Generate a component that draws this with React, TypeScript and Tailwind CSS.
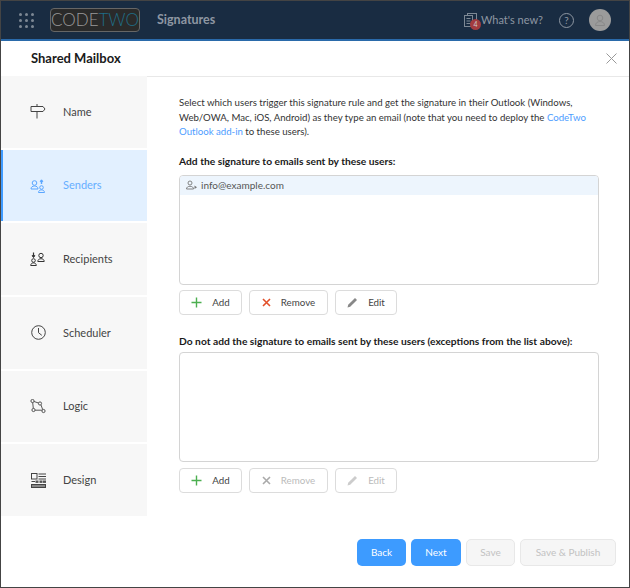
import React from "react";

function Signpost({ c = "#444" }: { c?: string }) {
  return (
    <svg width="16" height="16" viewBox="0 0 16 16" fill="none" stroke={c} strokeWidth="1">
      <path d="M1 2.500h12l2 2.500-2 2.500H1z" fill="none" />
      <path d="M7 0v2.500M7 7.500v7" />
    </svg>
  );
}
function Senders() {
  return (
    <svg width="16" height="14" viewBox="0 0 16 14" fill="none" stroke="#5aa6ff" strokeWidth="1">
      <circle cx="4.500" cy="4" r="2.300" />
      <path d="M1 10c0-2 1.500-3 3.500-3S8 8 8 10z" />
      <circle cx="11.500" cy="8.500" r="1.800" />
      <path d="M8.500 13.500c0-1.600 1.300-2.600 3-2.600s3 1 3 2.600z" />
      <path d="M11.500 1v4" strokeWidth="1.400" />
      <path d="M10.200 2.600 11.500 .8l1.300 1.800z" fill="#5aa6ff" />
    </svg>
  );
}
function Recipients() {
  return (
    <svg width="16" height="14" viewBox="0 0 16 14" fill="none" stroke="#333" strokeWidth="1">
      <circle cx="11" cy="3.500" r="2.200" />
      <path d="M7.800 9.500c0-1.800 1.400-2.800 3.200-2.800s3.200 1 3.200 2.800z" />
      <circle cx="3.500" cy="8.500" r="1.800" />
      <path d="M.7 13.500c0-1.600 1.200-2.600 2.800-2.600s2.800 1 2.800 2.600z" />
      <path d="M3.500 .5v4" strokeWidth="1.200" />
      <path d="M2.200 3.600 3.500 5.600l1.300-2z" fill="#333" />
    </svg>
  );
}
function Clock() {
  return (
    <svg width="15" height="15" viewBox="0 0 15 15" fill="none" stroke="#444" strokeWidth="1">
      <circle cx="7.500" cy="7.500" r="6.800" />
      <path d="M7.500 3v4.700l3.300 2.600" />
    </svg>
  );
}
function Logic() {
  return (
    <svg width="16" height="15" viewBox="0 0 16 15" fill="none" stroke="#444" strokeWidth="0.9">
      <circle cx="2.500" cy="2" r="1.600" />
      <circle cx="10" cy="4.500" r="1.600" />
      <circle cx="3.500" cy="11" r="1.600" />
      <circle cx="13.500" cy="12" r="1.600" />
      <path d="M4 2.500 8.500 4M2.700 3.600 3.300 9.400M5.100 11.200H11.900M11 6 12.700 10.600" />
    </svg>
  );
}
function Design() {
  return (
    <svg width="15" height="15" viewBox="0 0 15 15" fill="none" stroke="#444" strokeWidth="1">
      <rect x="0.500" y="0.500" width="5.500" height="5.500" />
      <path d="M7.500 1h7.500M7.500 3.500h7.500M7.500 6h7.500" />
      <path d="M0.500 8.500H4" />
      <rect x="4.500" y="7.500" width="3" height="2.400" fill="#555" stroke="none" />
      <rect x="8.500" y="7.500" width="3" height="2.400" fill="#555" stroke="none" />
      <rect x="12" y="7.500" width="3" height="2.400" fill="#555" stroke="none" />
      <rect x="0.500" y="11.500" width="14" height="3" fill="#888" />
    </svg>
  );
}
function Plus({ c = "#4caf50" }: { c?: string }) {
  return (
    <svg width="11" height="11" viewBox="0 0 11 11" stroke={c} strokeWidth="1.400">
      <path d="M5.500 0.500v10M0.500 5.500h10" />
    </svg>
  );
}
function Cross({ c }: { c: string }) {
  return (
    <svg width="9" height="9" viewBox="0 0 9 9" stroke={c} strokeWidth="1.600">
      <path d="M1 1l7 7M8 1 1 8" />
    </svg>
  );
}
function Pencil({ c }: { c: string }) {
  return (
    <svg width="11" height="11" viewBox="0 0 11 11" fill={c}>
      <path d="M0.500 10.500 1.200 7.800 8 1l2 2-6.800 6.800z" />
    </svg>
  );
}

function NavItem({ label, icon, active }: { label: string; icon: React.ReactNode; active?: boolean }) {
  return (
    <div
      className={`flex flex-1 items-center pl-[30px] border-l-[3px] -ml-[1px] ${
        active ? "bg-[#e2f0ff] border-[#3f9bff] text-[#66aeff]" : "bg-[#f7f7f7] border-transparent text-[#444]"
      }`}
    >
      <div className="w-[16px] flex justify-center -ml-[3px]">{icon}</div>
      <span className="ml-[17px] text-[11px]">{label}</span>
    </div>
  );
}

function Tool({ w, icon, label, disabled }: { w: string; icon: React.ReactNode; label: string; disabled?: boolean }) {
  return (
    <div
      className={`${w} h-[25px] flex items-center justify-center gap-[10px] rounded-[4px] border border-[#dcdcdc] bg-white text-[9.750px] ${
        disabled ? "text-[#bbb]" : "text-[#444]"
      }`}
    >
      {icon}
      <span>{label}</span>
    </div>
  );
}

export default function App() {
  return (
    <div
      className="w-[630px] h-[588px] flex flex-col bg-white overflow-hidden border border-[#444] text-[#333]"
      style={{ fontFamily: 'Lato, sans-serif' }}
    >
      <header className="h-[38px] shrink-0 bg-[#192c42] flex items-center pl-[18px] pr-[18px]">
        <div className="grid grid-cols-3 gap-[3px] w-[15px]">
          {Array.from({ length: 9 }).map((_, i) => (
            <span key={i} className="w-[3px] h-[3px] rounded-full bg-[#7d8894]" />
          ))}
        </div>
        <div className="ml-[16px] w-[90px] h-[24px] rounded-[4px] border border-[#666] bg-[#2a2a2a] flex items-center justify-center text-[17px] font-light">
          <span className="text-[#999]">CODE</span>
          <span className="text-[#1f6d87]">TWO</span>
        </div>
        <span className="ml-[17px] text-[12.500px] font-bold text-[#8e97a2]">Signatures</span>
        <div className="ml-auto flex items-center">
          <div className="relative w-[15px] h-[15px] mr-[2px]">
            <svg width="14" height="14" viewBox="0 0 14 14" fill="none" stroke="#7d8894" strokeWidth="1">
              <rect x="3.500" y="0.500" width="9" height="11" />
              <rect x="0.500" y="2.500" width="8" height="11" fill="#192c42" />
              <path d="M2.500 5.500h4M2.500 8h4M2.500 10.500h4" />
            </svg>
            <span className="absolute left-[6px] top-[6px] w-[11px] h-[11px] rounded-full bg-[#a33c3f] text-[#ccc] text-[7px] leading-[11px] text-center">4</span>
          </div>
          <span className="text-[11px] text-[#8e97a2]">What's new?</span>
          <div className="ml-[16px] w-[15px] h-[15px] rounded-full border border-[#8e97a2] text-[#8e97a2] text-[10px] leading-[13px] text-center">?</div>
          <div className="ml-[15px] w-[22px] h-[22px] rounded-full bg-[#9b9b9b] flex items-center justify-center">
            <svg width="12" height="12" viewBox="0 0 12 12" fill="none" stroke="#888" strokeWidth="1">
              <circle cx="6" cy="4" r="2.800" />
              <path d="M1.500 11.500c0-2.500 2-4 4.500-4s4.500 1.500 4.500 4z" />
            </svg>
          </div>
        </div>
      </header>
      <div className="h-[2px] shrink-0 bg-[#2a6aaa]" />
      <div className="h-[35px] shrink-0 flex items-center justify-between pl-[30px] pr-[12px]">
        <span className="text-[13px] font-bold text-[#1a1a1a]">Shared Mailbox</span>
        <svg width="11" height="11" viewBox="0 0 11 11" stroke="#999" strokeWidth="1">
          <path d="M0.500 0.500l10 10M10.500 0.500l-10 10" />
        </svg>
      </div>
      <div className="flex flex-1 min-h-0">
        <nav className="w-[146px] h-[440px] flex flex-col gap-[2px] shrink-0">
          <NavItem label="Name" icon={<Signpost />} />
          <NavItem label="Senders" icon={<Senders />} active />
          <NavItem label="Recipients" icon={<Recipients />} />
          <NavItem label="Scheduler" icon={<Clock />} />
          <NavItem label="Logic" icon={<Logic />} />
          <NavItem label="Design" icon={<Design />} />
        </nav>
        <main className="flex-1 min-w-0 flex flex-col">
          <div className="flex-1 border-t border-[#e8e8e8] pl-[32px] pr-[30px] pt-[18px]">
            <p className="text-[9.650px] leading-[14.500px] text-[#333] whitespace-nowrap">
              Select which users trigger this signature rule and get the signature in their Outlook (Windows,
              <br />
              Web/OWA, Mac, iOS, Android) as they type an email (note that you need to deploy the{" "}
              <span className="text-[#4d9dff]">CodeTwo</span>
              <br />
              <span className="text-[#4d9dff]">Outlook add-in</span> to these users).
            </p>
            <div className="mt-[15px] text-[10.250px] font-bold text-[#1a1a1a] leading-[14px] whitespace-nowrap">Add the signature to emails sent by these users:</div>
            <div className="mt-[7px] h-[110px] rounded-[4px] border border-[#d4d4d4] overflow-hidden">
              <div className="h-[19px] bg-[#edf5fd] flex items-center pl-[6px] text-[10px] text-[#555]">
                <svg width="12" height="10" viewBox="0 0 12 10" fill="none" stroke="#777" strokeWidth="0.9" className="mr-[3px]">
                  <circle cx="4" cy="3" r="2" />
                  <path d="M0.500 9c0-1.800 1.500-2.700 3.500-2.700S7.500 7.200 7.500 9z" />
                  <path d="M8.500 5.500v3.500l2.500-1.700z" fill="#777" stroke="none" />
                </svg>
                info@example.com
              </div>
            </div>
            <div className="mt-[5px] flex gap-[7px]">
              <Tool w="w-[63px]" icon={<Plus />} label="Add" />
              <Tool w="w-[79px]" icon={<Cross c="#e2502a" />} label="Remove" />
              <Tool w="w-[62px]" icon={<Pencil c="#888" />} label="Edit" />
            </div>
            <div className="mt-[19px] text-[10.250px] font-bold text-[#1a1a1a] leading-[14px] whitespace-nowrap">Do not add the signature to emails sent by these users (exceptions from the list above):</div>
            <div className="mt-[4px] h-[110px] rounded-[4px] border border-[#d4d4d4]" />
            <div className="mt-[6px] flex gap-[7px]">
              <Tool w="w-[63px]" icon={<Plus />} label="Add" />
              <Tool w="w-[79px]" icon={<Cross c="#aaa" />} label="Remove" disabled />
              <Tool w="w-[62px]" icon={<Pencil c="#ccc" />} label="Edit" disabled />
            </div>
          </div>
          <div className="h-[71px] shrink-0 flex items-start justify-end gap-[5px] pt-[23px] pr-[13px] -ml-[146px] text-[10px]">
            <div className="w-[49px] h-[27px] rounded-[5px] bg-[#3d9bff] text-white flex items-center justify-center">Back</div>
            <div className="w-[50px] h-[27px] rounded-[5px] bg-[#3d9bff] text-white flex items-center justify-center">Next</div>
            <div className="w-[49px] h-[27px] rounded-[5px] bg-[#f6f6f6] border border-[#e8e8e8] text-[#c2c2c2] flex items-center justify-center">Save</div>
            <div className="w-[96px] h-[27px] rounded-[5px] bg-[#f6f6f6] border border-[#e8e8e8] text-[#c2c2c2] flex items-center justify-center">Save &amp; Publish</div>
          </div>
        </main>
      </div>
    </div>
  );
}
